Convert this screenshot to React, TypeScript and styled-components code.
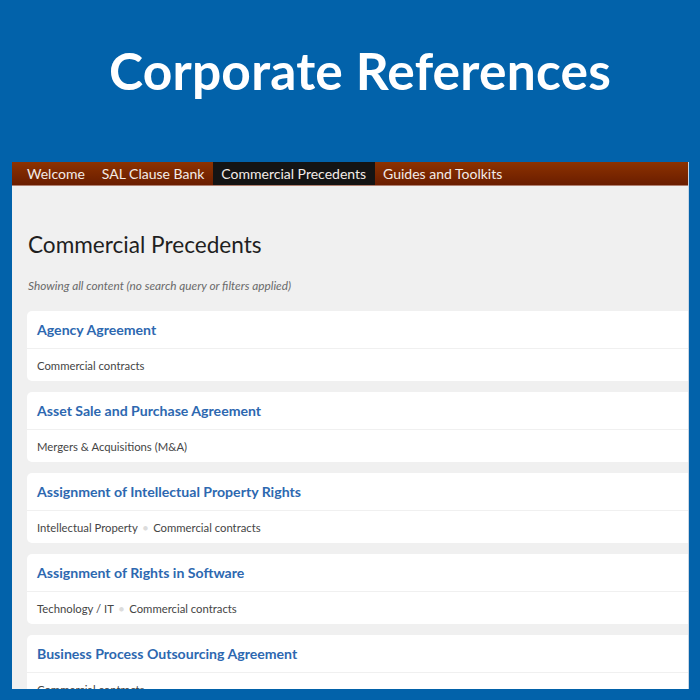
import React from "react";
import styled, { createGlobalStyle } from "styled-components";

const Global = createGlobalStyle`
  html, body { margin: 0; padding: 0; }
  body {
    background: #0262aa;
    font-family: Lato, "Open Sans", sans-serif;
    width: 700px;
    height: 700px;
    overflow: hidden;
  }
`;

const Page = styled.div`
  display: flex;
  flex-direction: column;
  width: 700px;
  height: 700px;
`;

const Banner = styled.h1`
  margin: 0;
  height: 162px;
  box-sizing: border-box;
  padding: 37px 0 0 20px;
  text-align: center;
  color: #ffffff;
  font-family: Lato, sans-serif;
  font-weight: 700;
  font-size: 51.5px;
  line-height: 66px;
  letter-spacing: 0.2px;
`;

const Frame = styled.div`
  margin-left: 12px;
  width: 677px;
  height: 527px;
  background: #f0f0f0;
  overflow: hidden;
  display: flex;
  flex-direction: column;
  border-right: 1px solid #c9d6e4;
  box-sizing: border-box;
`;

const Nav = styled.nav`
  display: flex;
  height: 23px;
  flex-shrink: 0;
  padding-left: 6.5px;
  background: linear-gradient(#8d3200, #6a1d00);
  border-bottom: 1px solid #b08070;
`;

const NavItem = styled.div<{ $active?: boolean }>`
  display: flex;
  align-items: center;
  padding: 0 8.5px;
  font-size: 14px;
  color: #f3ece8;
  background: ${(p) => (p.$active ? "#141414" : "transparent")};
  white-space: nowrap;
`;

const Content = styled.div`
  width: 760px;
  padding: 45px 0 0 15px;
  display: flex;
  flex-direction: column;
`;

const Heading = styled.h2`
  margin: 0 0 0 1px;
  font-size: 22.6px;
  font-weight: 400;
  line-height: 28px;
  color: #1f1f1f;
`;

const Summary = styled.p`
  margin: 20px 0 18px 1px;
  font-size: 11.8px;
  font-style: italic;
  color: #6a6a6a;
  line-height: 14px;
`;

const List = styled.div`
  display: flex;
  flex-direction: column;
  gap: 11px;
`;

const Card = styled.div`
  background: #ffffff;
  border-radius: 5px;
  display: flex;
  flex-direction: column;
`;

const CardTitle = styled.div`
  height: 37px;
  display: flex;
  align-items: center;
  padding: 0 10px;
  font-size: 14.1px;
  font-weight: 700;
  color: #2d68b0;
  border-bottom: 1px solid #f0f0f0;
`;

const Tags = styled.div`
  height: 32px;
  display: flex;
  align-items: center;
  padding: 0 10px;
  font-size: 11.3px;
  color: #454545;
`;

const Dot = styled.span`
  color: #dcdcdc;
  margin: 0 5px;
  font-size: 9px;
`;

const items: { title: string; tags: string[] }[] = [
  { title: "Agency Agreement", tags: ["Commercial contracts"] },
  { title: "Asset Sale and Purchase Agreement", tags: ["Mergers & Acquisitions (M&A)"] },
  {
    title: "Assignment of Intellectual Property Rights",
    tags: ["Intellectual Property", "Commercial contracts"],
  },
  { title: "Assignment of Rights in Software", tags: ["Technology / IT", "Commercial contracts"] },
  { title: "Business Process Outsourcing Agreement", tags: ["Commercial contracts"] },
];

export default function App() {
  return (
    <Page>
      <Global />
      <Banner>Corporate References</Banner>
      <Frame>
        <Nav>
          <NavItem>Welcome</NavItem>
          <NavItem>SAL Clause Bank</NavItem>
          <NavItem $active>Commercial Precedents</NavItem>
          <NavItem>Guides and Toolkits</NavItem>
        </Nav>
        <Content>
          <Heading>Commercial Precedents</Heading>
          <Summary>Showing all content (no search query or filters applied)</Summary>
          <List>
            {items.map((it) => (
              <Card key={it.title}>
                <CardTitle>{it.title}</CardTitle>
                <Tags>
                  {it.tags.map((t, i) => (
                    <React.Fragment key={t}>
                      {i > 0 && <Dot>●</Dot>}
                      {t}
                    </React.Fragment>
                  ))}
                </Tags>
              </Card>
            ))}
          </List>
        </Content>
      </Frame>
    </Page>
  );
}
